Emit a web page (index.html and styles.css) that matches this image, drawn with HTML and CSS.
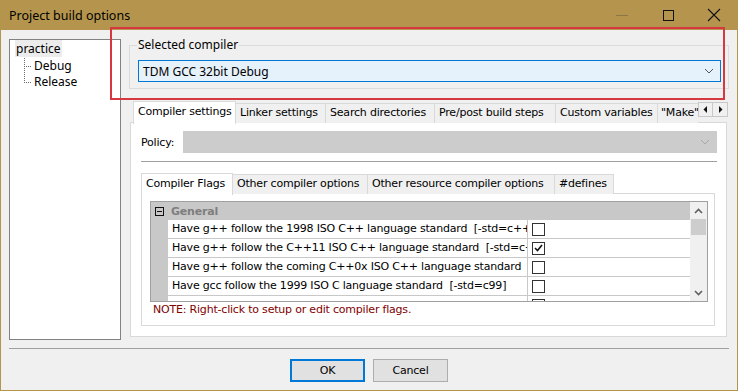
FILE: index.html
```html
<!DOCTYPE html>
<html>
<head>
    <meta charset="utf-8">
    <title>Project build options</title>
    <link rel="stylesheet" href="styles.css">
</head>
<body>
<div class="window">
    <div class="titlebar">
        <span class="title">Project build options</span>
        <div class="caption">
            <span class="cap-btn cap-min"><svg width="12" height="12" viewBox="0 0 12 12"><line x1="0" y1="6.5" x2="12" y2="6.5" stroke="#8c7643" stroke-width="1"/></svg></span>
            <span class="cap-btn cap-max"><svg width="12" height="12" viewBox="0 0 12 12"><rect x="1.5" y="1.5" width="10" height="10" fill="none" stroke="#111" stroke-width="1"/></svg></span>
            <span class="cap-btn cap-close"><svg width="14" height="14" viewBox="0 0 14 14"><path d="M1 1 L13 13 M13 1 L1 13" stroke="#111" stroke-width="1.1"/></svg></span>
        </div>
    </div>

    <div class="content">
        <div class="tree">
            <div class="tree-root"><span class="sel">practice</span></div>
            <div class="tree-children">
                <div class="tree-item">Debug</div>
                <div class="tree-item">Release</div>
            </div>
        </div>

        <div class="main">
            <fieldset class="group">
                <legend>Selected compiler</legend>
                <div class="combo combo-active">
                    <span>TDM GCC 32bit Debug</span>
                    <svg class="chev" width="10" height="6" viewBox="0 0 10 6"><polyline points="1,1 5,5 9,1" fill="none" stroke="#555" stroke-width="1"/></svg>
                </div>
            </fieldset>

            <div class="notebook">
                <div class="tabs">
                    <div class="tab active w-cs">Compiler settings</div>
                    <div class="tab w-ls">Linker settings</div>
                    <div class="tab w-sd">Search directories</div>
                    <div class="tab w-pp">Pre/post build steps</div>
                    <div class="tab w-cv">Custom variables</div>
                    <div class="tab w-mk">"Make" commands</div>
                    <div class="tab-arrows">
                        <span class="arrow"><svg width="5" height="7" viewBox="0 0 5 7"><polygon points="4,0 4,7 0.5,3.5" fill="#111"/></svg></span>
                        <span class="arrow"><svg width="5" height="7" viewBox="0 0 5 7"><polygon points="1,0 1,7 4.5,3.5" fill="#111"/></svg></span>
                    </div>
                </div>
                <div class="page">
                    <div class="policy">
                        <span class="policy-label">Policy:</span>
                        <div class="combo combo-disabled">
                            <span></span>
                            <svg class="chev" width="10" height="6" viewBox="0 0 10 6"><polyline points="1,1 5,5 9,1" fill="none" stroke="#a8a8a8" stroke-width="1"/></svg>
                        </div>
                    </div>
                    <div class="hline"></div>

                    <div class="notebook inner">
                        <div class="tabs">
                            <div class="tab active w-cf">Compiler Flags</div>
                            <div class="tab w-oc">Other compiler options</div>
                            <div class="tab w-or">Other resource compiler options</div>
                            <div class="tab w-df">#defines</div>
                        </div>
                        <div class="page inner-page">
                            <div class="propgrid">
                                <div class="pg-body">
                                    <div class="pg-cat">
                                        <span class="pg-toggle"><svg width="9" height="9" viewBox="0 0 9 9"><rect x="0.5" y="0.5" width="8" height="8" fill="none" stroke="#111"/><line x1="2" y1="4.5" x2="7" y2="4.5" stroke="#111"/></svg></span>
                                        <span class="pg-cat-name">General</span>
                                    </div>
                                    <div class="pg-row">
                                        <div class="pg-name">Have g++ follow the 1998 ISO C++ language standard&nbsp; [-std=c++98]</div>
                                        <div class="pg-value"><span class="check"></span></div>
                                    </div>
                                    <div class="pg-row">
                                        <div class="pg-name">Have g++ follow the C++11 ISO C++ language standard&nbsp; [-std=c++11]</div>
                                        <div class="pg-value"><span class="check checked"><svg width="9" height="8" viewBox="0 0 9 8"><polyline points="1,4 3.5,6.5 8,1" fill="none" stroke="#111" stroke-width="1.6"/></svg></span></div>
                                    </div>
                                    <div class="pg-row">
                                        <div class="pg-name">Have g++ follow the coming C++0x ISO C++ language standard&nbsp; [-std=c++0x]</div>
                                        <div class="pg-value"><span class="check"></span></div>
                                    </div>
                                    <div class="pg-row">
                                        <div class="pg-name">Have gcc follow the 1999 ISO C language standard&nbsp; [-std=c99]</div>
                                        <div class="pg-value"><span class="check"></span></div>
                                    </div>
                                    <div class="pg-row">
                                        <div class="pg-name"></div>
                                        <div class="pg-value"><span class="check"></span></div>
                                    </div>
                                </div>
                                <div class="scrollbar">
                                    <span class="sb-arrow"><svg width="9" height="6" viewBox="0 0 9 6"><polyline points="1,5 4.5,1.5 8,5" fill="none" stroke="#606060" stroke-width="1.6"/></svg></span>
                                    <span class="sb-thumb"></span>
                                    <span class="sb-track"></span>
                                    <span class="sb-arrow"><svg width="9" height="6" viewBox="0 0 9 6"><polyline points="1,1 4.5,4.5 8,1" fill="none" stroke="#606060" stroke-width="1.6"/></svg></span>
                                </div>
                            </div>
                            <div class="note">NOTE: Right-click to setup or edit compiler flags.</div>
                        </div>
                    </div>
                </div>
            </div>
        </div>
    </div>

    <div class="separator"></div>
    <div class="buttons">
        <button class="btn btn-default">OK</button>
        <button class="btn">Cancel</button>
    </div>

    <div class="highlight"></div>
</div>
</body>
</html>
```

FILE: styles.css
```css
* {
    box-sizing: border-box
}

body {
    margin: 0;
    background: #f0f0f0;
    font-family: "DejaVu Sans", Tahoma, sans-serif;
    font-size: 11px;
    letter-spacing: -0.2px;
    color: #000
}

.window {
    position: relative;
    width: 738px;
    height: 391px;
    border: 1px solid #b4954c;
    border-top: none;
    background: #f0f0f0;
    overflow: hidden
}

/* title bar */
.titlebar {
    height: 30px;
    background: #b5954d;
    display: flex;
    align-items: center;
    padding-left: 8px
}

.title {
    font-family: "Noto Sans", sans-serif;
    font-size: 12.5px;
    letter-spacing: 0;
    color: #000
}

.caption {
    margin-left: auto;
    display: flex;
    height: 100%
}

.cap-btn {
    width: 46px;
    display: flex;
    align-items: center;
    justify-content: center
}

/* body */
.content {
    display: flex;
    padding: 8px 8px 0 8px;
    height: 310px
}

.tree {
    width: 112px;
    height: 301px;
    margin-top: 1px;
    background: #fff;
    border: 1px solid #828282;
    padding: 1px 0 0 5px;
    font-family: "Noto Sans", sans-serif;
    font-size: 12px;
    letter-spacing: 0
}

.tree-root {
    height: 17px;
    line-height: 16px
}

.tree-root .sel {
    background: #ececec;
    padding: 0 1px
}

.tree-children {
    margin-left: 9px;
    height: 24px;
    background: repeating-linear-gradient(to bottom, #6a6a6a 0 1px, transparent 1px 2px) 0 0 / 1px 24px no-repeat
}

.tree-item {
    height: 16px;
    line-height: 16px;
    padding-left: 10px;
    background: repeating-linear-gradient(to right, #6a6a6a 0 1px, transparent 1px 2px) 0 8px / 8px 1px no-repeat
}

.main {
    width: 600px;
    margin-left: 8px;
    margin-top: -1px;
    display: flex;
    flex-direction: column
}

/* group box */
.group {
    margin: 0;
    width: 600px;
    border: 1px solid #dcdcdc;
    padding: 7px 7px 6px 8px;
    min-width: 0
}

.group legend {
    padding: 0 1px;
    margin-left: -1px;
    font-family: "Noto Sans", sans-serif;
    font-size: 12px;
    letter-spacing: 0;
    line-height: 16px
}

.combo {
    height: 22px;
    display: flex;
    align-items: center;
    justify-content: space-between;
    padding: 0 6px 0 4px
}

.combo-active {
    background: #e5f1fb;
    border: 1px solid #0078d7;
    font-family: "Noto Sans", sans-serif;
    font-size: 12px;
    letter-spacing: 0
}

.combo-disabled {
    flex: 1;
    background: #cccccc;
    border: 1px solid #cccccc
}

/* notebooks */
.notebook {
    margin-top: 11px
}

.tabs {
    display: flex;
    align-items: flex-end;
    height: 23px;
    padding-left: 4px;
    position: relative;
    z-index: 1
}

.tab {
    height: 20px;
    line-height: 18px;
    background: #f0f0f0;
    border: 1px solid #d9d9d9;
    border-left: none;
    border-bottom: none;
    white-space: nowrap;
    overflow: hidden;
    padding-left: 4px
}

.tab.active {
    height: 23px;
    line-height: 20px;
    background: #fff;
    border-left: 1px solid #d9d9d9;
    margin-bottom: -1px;
    padding-left: 4px
}

.w-cs { width: 103px }
.w-ls { width: 90px }
.w-sd { width: 109px }
.w-pp { width: 121px }
.w-cv { width: 102px }
.w-mk { width: 40px; border-right: none; padding-left: 3px }

.w-cf { width: 92px }
.w-oc { width: 135px }
.w-or { width: 187px }
.w-df { width: 59px }

.tab-arrows {
    display: flex;
    align-self: flex-start;
    margin-top: 2px
}

.arrow {
    width: 15px;
    height: 15px;
    border: 1px solid #c8c8c8;
    background: #f0f0f0;
    display: flex;
    align-items: center;
    justify-content: center
}

.arrow + .arrow {
    border-left: none
}

.page {
    width: 597px;
    height: 215px;
    background: #fff;
    border: 1px solid #d9d9d9;
    margin-top: -1px;
    margin-left: 1px;
    padding: 8px 9px 0 10px
}

.policy {
    display: flex;
    align-items: center;
    height: 22px
}

.policy-label {
    width: 42px
}

.hline {
    height: 1px;
    background: #a0a0a0;
    margin-top: 8px
}

.notebook.inner {
    margin-top: 10px;
    margin-right: 2px
}

.notebook.inner .tabs {
    padding-left: 0;
    height: 22px
}

.notebook.inner .tab {
    height: 20px
}

.notebook.inner .tab.active {
    height: 22px
}

.inner-page {
    width: 574px;
    height: 133px;
    margin-left: 0;
    padding: 7px 6px 0 8px
}

/* property grid */
.propgrid {
    display: flex;
    width: 558px;
    height: 101px;
    border: 1px solid #a0a0a0;
    overflow: hidden
}

.pg-body {
    flex: 1;
    background: #c8c8c8;
    overflow: hidden
}

.pg-cat {
    height: 18px;
    display: flex;
    align-items: center;
    padding-left: 4px
}

.pg-toggle {
    display: flex;
    width: 16px
}

.pg-cat-name {
    font-weight: bold;
    color: #7e7e7e
}

.pg-row {
    display: flex;
    height: 19px;
    margin-left: 17px;
    background: #fff;
    border-bottom: 1px solid #c8c8c8
}

.pg-name {
    width: 360px;
    padding-left: 4px;
    line-height: 18px;
    white-space: nowrap;
    overflow: hidden;
    border-right: 1px solid #c8c8c8
}

.pg-value {
    flex: 1;
    display: flex;
    align-items: center;
    padding-left: 4px
}

.check {
    width: 13px;
    height: 13px;
    border: 1px solid #333;
    background: #fff;
    display: flex;
    align-items: center;
    justify-content: center
}

.scrollbar {
    width: 17px;
    background: #f0f0f0;
    display: flex;
    flex-direction: column
}

.sb-arrow {
    height: 17px;
    display: flex;
    align-items: center;
    justify-content: center
}

.sb-thumb {
    height: 16px;
    background: #cdcdcd;
    margin: 0 1px
}

.sb-track {
    flex: 1
}

.note {
    color: #800000;
    padding-left: 3px;
    margin-top: 1px;
    line-height: 14px
}

/* bottom */
.separator {
    height: 1px;
    background: #a0a0a0;
    margin: 8px 8px 0 8px
}

.buttons {
    display: flex;
    justify-content: center;
    gap: 8px;
    margin-top: 10px
}

.btn {
    width: 75px;
    height: 23px;
    background: #e1e1e1;
    border: 1px solid #adadad;
    font-family: "DejaVu Sans", Tahoma, sans-serif;
    font-size: 11px;
    letter-spacing: -0.2px;
    padding: 0
}

.btn-default {
    border: 2px solid #0078d7
}

/* red marker drawn over the dialog */
.highlight {
    position: absolute;
    left: 109px;
    top: 27px;
    width: 615px;
    height: 73px;
    border: 2px solid #d5393f
}
```
